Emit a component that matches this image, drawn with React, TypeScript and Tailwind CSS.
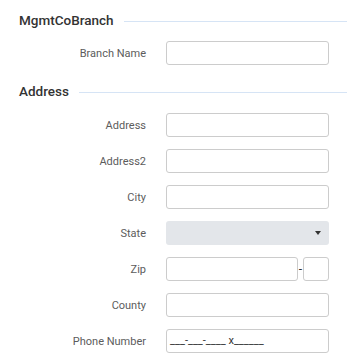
import React from "react";

const font = { fontFamily: "Roboto, 'Liberation Sans', sans-serif" };

function Header({ title }: { title: string }) {
  return (
    <div className="flex h-[20px] items-center gap-[10px]">
      <div className="text-[13.5px] font-medium text-[#333333] leading-none">{title}</div>
      <div className="h-px flex-1 bg-[#d6e4f5]" />
    </div>
  );
}

function Row({ label, children }: { label: string; children: React.ReactNode }) {
  return (
    <div className="flex h-[24px] items-center">
      <div className="w-[127px] shrink-0 text-right text-[11px] text-[#5c5c5c] leading-none">{label}</div>
      <div className="ml-[20px] flex w-[163px] items-center">{children}</div>
    </div>
  );
}

function Input({ className = "" }: { className?: string }) {
  return <div className={"h-[24px] rounded-[3px] border border-[#cccccc] bg-white " + className} />;
}

export default function App() {
  return (
    <div className="min-h-[361px] w-[347px] bg-white pl-[19px] pt-[11px]" style={font}>
      <Header title="MgmtCoBranch" />
      <div className="mt-[10px]">
        <Row label="Branch Name">
          <Input className="w-full" />
        </Row>
      </div>
      <div className="mt-[17px]">
        <Header title="Address" />
      </div>
      <div className="mt-[11px] flex flex-col gap-[12px]">
        <Row label="Address">
          <Input className="w-full" />
        </Row>
        <Row label="Address2">
          <Input className="w-full" />
        </Row>
        <Row label="City">
          <Input className="w-full" />
        </Row>
        <Row label="State">
          <div className="flex h-[24px] w-full items-center justify-end rounded-[3px] bg-[#e3e6ea] pr-[8px]">
            <svg width="6" height="4" viewBox="0 0 6 4">
              <path d="M0 0 L6 0 L3 4 Z" fill="#333" />
            </svg>
          </div>
        </Row>
        <Row label="Zip">
          <Input className="w-[132px]" />
          <span className="mx-[1px] text-[12px] leading-none text-[#333]">-</span>
          <Input className="w-[26px]" />
        </Row>
        <Row label="County">
          <Input className="w-full" />
        </Row>
        <Row label="Phone Number">
          <div className="flex h-[24px] w-full items-center rounded-[3px] border border-[#cccccc] bg-white pl-[3px] text-[11px] text-[#333]">
            ___-___-____ x______
          </div>
        </Row>
      </div>
    </div>
  );
}
